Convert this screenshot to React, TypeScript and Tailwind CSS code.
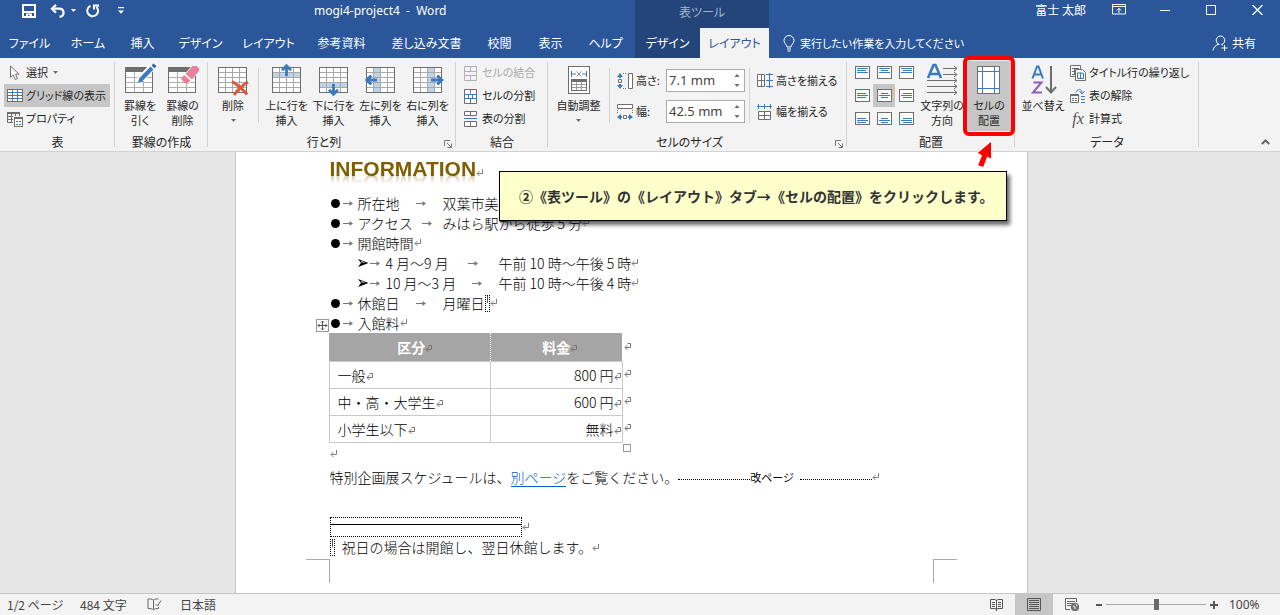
import React from "react";

const GRAY = "#6e6e6e";
const BLUE = "#3a7abd";

type Kids = { children?: React.ReactNode };

/* ---------- small marks used inside the document ---------- */

function Ret() {
  return (
    <svg width="8" height="8" viewBox="0 0 8 8" className="inline-block shrink-0" fill="none" stroke="#808080" aria-hidden="true">
      <path d="M6.500 0v4.500H1M3.500 2 1 4.500 3.500 7" />
    </svg>
  );
}

function CellRet() {
  return (
    <svg width="8" height="8" viewBox="0 0 8 8" className="inline-block shrink-0" fill="none" stroke="#757575" aria-hidden="true">
      <path d="M3.500 .5h3v4H1M3.500 2 1 4.500 3.500 7" />
    </svg>
  );
}

function TabMark() {
  return (
    <svg width="11" height="7" viewBox="0 0 11 7" className="inline-block shrink-0" fill="none" stroke="#777" aria-hidden="true">
      <path d="M0 3.500h9" />
      <path d="M6.500 1 10 3.500 6.500 6z" fill="#777" stroke="none" />
    </svg>
  );
}

/* ---------- ribbon icons ---------- */

function Grid({ band, arrow }: { band?: "top" | "bottom" | "left" | "right"; arrow?: React.ReactNode }) {
  return (
    <svg width="32" height="34" viewBox="0 0 32 34" aria-hidden="true" fill="none">
      <rect x="1.500" y="4.500" width="28" height="25" fill="#fff" stroke={GRAY} />
      {band === "top" && <rect x="2" y="10" width="27" height="5" fill="#bfd3e8" />}
      {band === "bottom" && <rect x="2" y="20" width="27" height="5" fill="#bfd3e8" />}
      {band === "left" && <rect x="9" y="5" width="7" height="24" fill="#bfd3e8" />}
      {band === "right" && <rect x="16" y="5" width="7" height="24" fill="#bfd3e8" />}
      <path d="M2 9.500h27M2 14.500h27M2 19.500h27M2 24.500h27M8.500 5v24M15.500 5v24M22.500 5v24" stroke="#a8a8a8" />
      {arrow}
    </svg>
  );
}

const upArrow = <path d="M15.500 2.500V13M11 7.200 15.500 2.700 20 7.200" stroke={BLUE} strokeWidth="2.800" />;
const downArrow = <path d="M15.500 21v10M11 26.800l4.500 4.500 4.500-4.500" stroke={BLUE} strokeWidth="2.800" />;
const leftArrow = <path d="M12 17H2M6.200 12.500 1.700 17l4.500 4.500" stroke={BLUE} strokeWidth="2.800" />;
const rightArrow = <path d="M19 17h10M25.300 12.500l4.500 4.500-4.500 4.500" stroke={BLUE} strokeWidth="2.800" />;
const cross = <path d="M15 18.500c5 3 11 8 15 13M31 19c-5 3-10 7-14 13" stroke="#d8593b" strokeWidth="3" />;

function DrawTable({ erase }: { erase?: boolean }) {
  return (
    <svg width="34" height="34" viewBox="0 0 34 34" aria-hidden="true" fill="none">
      <rect x="2.500" y="4.500" width="27" height="25" fill="#fff" stroke={GRAY} />
      <rect x="2" y="4" width="28" height="5" fill={GRAY} />
      <path d="M3 14.500h26M3 19.500h26M3 24.500h26M11.500 9v20M20.500 9v20" stroke="#b0b0b0" />
      {erase ? (
        <g>
          <path d="M14.500 16 26 2.500l8 5L22.500 21.500z" fill="#fff" />
          <path d="M19.500 11 26.500 3h4l2.500 2v3l-7 8.500z" fill="#e8829a" />
          <path d="m15.500 14.800 2.500-2.700 6.500 5.500-2.700 2.900h-2.300l-4-3.700z" fill="#e8829a" />
        </g>
      ) : (
        <g>
          <path d="M15 19 30 3" stroke="#fff" strokeWidth="7" />
          <path d="M18 16.500 29 5" stroke={BLUE} strokeWidth="4" />
          <path d="M30 3.800 32 1.800" stroke="#2f5f9c" strokeWidth="4" />
          <path d="m15 20 1.500-5.500 4 4z" fill={BLUE} />
        </g>
      )}
    </svg>
  );
}

function AutoFit() {
  return (
    <svg width="32" height="34" viewBox="0 0 32 34" aria-hidden="true" fill="none">
      <rect x="5.500" y="3.500" width="21" height="27" fill="#fff" stroke={GRAY} />
      <path d="M8.500 8v6M23.500 8v6M9 11h4M19 11h4" stroke={BLUE} />
      <path d="m13.500 8.500 5 5M18.500 8.500l-5 5" stroke="#888" />
      <rect x="8.500" y="16.500" width="15" height="11" stroke={GRAY} />
      <rect x="8" y="16" width="16" height="3" fill={GRAY} />
      <path d="M9 21.500h14M9 24.500h14M13.500 19v8M18.500 19v8" stroke="#999" />
    </svg>
  );
}

function TextDirection() {
  return (
    <svg width="34" height="34" viewBox="0 0 34 34" aria-hidden="true" fill="none">
      <path d="m3 15 5.500-13h2L16 15M5 11h9" stroke={BLUE} strokeWidth="2.600" />
      <path d="M18 5.500h14M18 11.500h14M2 17.500h30M2 23.500h30M2 29.500h30M29 3l3 2.500L29 8M29 9l3 2.500-3 2.500M29 15l3 2.500-3 2.500M29 21l3 2.500-3 2.500M29 27l3 2.500-3 2.500" stroke={GRAY} />
    </svg>
  );
}

function CellMargins() {
  return (
    <svg width="32" height="34" viewBox="0 0 32 34" aria-hidden="true" fill="none">
      <rect x="4.500" y="3.500" width="22" height="27" fill="#fff" stroke={GRAY} />
      <path d="M9.500 4v26M21.500 4v26M5 8.500h21M5 25.500h21" stroke={BLUE} />
    </svg>
  );
}

function SortIcon() {
  return (
    <svg width="32" height="34" viewBox="0 0 32 34" aria-hidden="true" fill="none">
      <path d="m5.500 15.500 4.500-12h1.500l4.500 12M7 11.500h7.500" stroke={BLUE} strokeWidth="2" />
      <path d="M6.500 19.500h8L6 29.500h9" stroke="#8f5fb5" strokeWidth="2" />
      <path d="M24 3v26M19 24l5 5.500 5-5.500" stroke={GRAY} strokeWidth="2" />
    </svg>
  );
}

function SmallIcon({ children }: Kids) {
  return (
    <svg width="16" height="16" viewBox="0 0 16 16" fill="none" className="shrink-0" aria-hidden="true">
      {children}
    </svg>
  );
}

const icons: Record<string, React.ReactNode> = {
  pointer: (
    <SmallIcon>
      <path d="M3.500 1v11.500l2.800-2.600 2 4.600 2.200-1-2-4.400h3.400z" fill="#fff" stroke={GRAY} />
    </SmallIcon>
  ),
  gridlines: (
    <SmallIcon>
      <rect x=".5" y="1.500" width="15" height="12" fill="#fff" stroke={GRAY} />
      <path d="M1 4.500h14M1 7.500h14M1 10.500h14M5.500 2v11M10.500 2v11" stroke={BLUE} />
    </SmallIcon>
  ),
  properties: (
    <SmallIcon>
      <path d="M.5 1v10.500H6M0 1.500h13M0 2.500h13M12.500 1v4M1 5.500h5M1 8.500h5M4.500 3v8M8.500 3v2" stroke={GRAY} />
      <rect x="7.500" y="6.500" width="8" height="9" fill="#fff" stroke={GRAY} />
      <path d="M7 7.500h9" stroke={GRAY} />
      <path d="M9 10.500h2M12 10.500h2M9 13.500h2M12 13.500h2" stroke={BLUE} />
    </SmallIcon>
  ),
  merge: (
    <SmallIcon>
      <path d="M1.500 1.500h12v14h-12zM1.500 6.500h12M1.500 10.500h12M7.500 1.500v5M7.500 10.500v5" fill="#f7effa" stroke="#b4b0b4" />
    </SmallIcon>
  ),
  split: (
    <SmallIcon>
      <path d="M1.500 1.500h12v14h-12zM7.500 1.500v4M7.500 11v4.500" fill="#fff" stroke={GRAY} />
      <path d="M1 6.500h13M1 10.500h13M5.500 6v4.500M9.500 6v4.500" stroke={BLUE} />
    </SmallIcon>
  ),
  splitTable: (
    <SmallIcon>
      <path d="M1.500 4.500v-4h12v4zM1.500 10.500h12v5h-12zM7.500 .5v4M7.500 10.500v5" fill="#fff" stroke={GRAY} />
      <path d="M1 7.500h13" stroke={BLUE} />
    </SmallIcon>
  ),
  height: (
    <SmallIcon>
      <path d="M3 1v4M3 15v-4" stroke={BLUE} strokeWidth="2" />
      <path d="m0 4 3-4 3 4zM0 12l3 4 3-4z" fill={BLUE} />
      <path d="M1.500 6.500h3v3h-3z" stroke={GRAY} />
      <path d="M6 .5h4M6 15.500h4" stroke={GRAY} strokeDasharray="1 1" />
      <path d="M11.500 .5h4v15h-4z" fill="#fff" stroke={GRAY} />
    </SmallIcon>
  ),
  width: (
    <SmallIcon>
      <path d="M.5 .5h15v4H.5z" fill="#fff" stroke={GRAY} />
      <path d="M.5 6v4M15.500 6v4" stroke={GRAY} strokeDasharray="1 1" />
      <path d="M1 13h4M15 13h-4" stroke={BLUE} strokeWidth="2" />
      <path d="m4 10-4 3 4 3zM12 10l4 3-4 3z" fill={BLUE} />
      <path d="M6.500 11.500h3v3h-3z" fill="#fff" stroke={GRAY} />
    </SmallIcon>
  ),
  distRows: (
    <SmallIcon>
      <path d="M.5 1.500h7v12h-7zM.5 7.500h7M4.500 1.500v12" fill="#fff" stroke={GRAY} />
      <path d="M12.500 0v15M9 1.500h7M9 7.500h7M9 13.500h7" stroke={BLUE} />
    </SmallIcon>
  ),
  distCols: (
    <SmallIcon>
      <path d="M1.500 7.500h12v8h-12zM1.500 11.500h12M7.500 7.500v8" fill="#fff" stroke={GRAY} />
      <path d="M0 2.500h15M1.500 0v5M7.500 0v5M13.500 0v5" stroke={BLUE} />
    </SmallIcon>
  ),
  repeat: (
    <SmallIcon>
      <path d="M.5 .5h10v11H.5z" fill="#fff" stroke={GRAY} />
      <path d="M2 3.500h7M4.500 3v7M2 6.500h4M2 9.500h4" stroke={GRAY} />
      <path d="M5.500 4.500h7l3 3v8h-10z" fill="#fff" stroke={GRAY} />
      <path d="M7 8h6M7.500 8v5.500h6V8M10.500 8v5.500" stroke={BLUE} />
    </SmallIcon>
  ),
  convert: (
    <SmallIcon>
      <path d="M.5 6.500h8v8h-8zM0 7.500h9" fill="#fff" stroke={GRAY} />
      <path d="M2 10.500h2M5 10.500h2M2 12.500h2M5 12.500h2" stroke={GRAY} />
      <path d="M6 4.500c1-4 6-4 6 .5M9.500 3l2.500 3 2.500-3M11 8.500h4M11 11.500h4M11 14.500h4" stroke={BLUE} />
    </SmallIcon>
  ),
};

/* ---------- ribbon building blocks ---------- */

function Caret({ className = "" }: { className?: string }) {
  return (
    <svg width="5" height="3" viewBox="0 0 5 3" className={className} fill="currentColor" aria-hidden="true">
      <path d="M0 0h5L2.500 3z" />
    </svg>
  );
}

function Launcher() {
  return (
    <button aria-label="詳細" className="absolute right-1 bottom-[3px]">
      <svg width="8" height="8" viewBox="0 0 8 8" fill="none" stroke="#777" aria-hidden="true">
        <path d="M.5 6V.5H6M3 3l4 4M7.500 3.500v4h-4" />
      </svg>
    </button>
  );
}

function Group({ label, width, launcher, children }: Kids & { label: string; width: string; launcher?: boolean }) {
  return (
    <section aria-label={label} className={`relative flex shrink-0 flex-col ${width}`}>
      <div className="flex h-[74px] items-start pt-[3px] pl-1">{children}</div>
      <div className={`text-center text-[12px] leading-[19px] ${launcher ? "pr-4" : ""}`}>{label}</div>
      {launcher && <Launcher />}
      <span className="absolute top-1 right-0 h-[85px] w-px bg-[#d2d2d2]" />
    </section>
  );
}

function Big({ icon, lines, width, caret, active }: { icon: React.ReactNode; lines: string[]; width: string; caret?: boolean; active?: boolean }) {
  return (
    <button className={`flex h-[70px] shrink-0 flex-col items-center text-[11px] leading-[15px] whitespace-nowrap ${width} ${active ? "bg-[#c6c6c6]" : ""}`}>
      <span className="mt-[2px] mb-px block h-[34px]">{icon}</span>
      {lines.map((l) => (
        <span key={l}>{l}</span>
      ))}
      {caret && <Caret className="mt-1.5 text-[#6e6e6e]" />}
    </button>
  );
}

function Row({ icon, label, caret, active, disabled }: { icon: React.ReactNode; label: string; caret?: boolean; active?: boolean; disabled?: boolean }) {
  return (
    <button
      disabled={disabled}
      className={`flex h-[23px] items-center gap-[3px] pr-1 pl-[3px] text-[11px] whitespace-nowrap ${active ? "bg-[#c6c6c6]" : ""} ${disabled ? "text-[#aaa]" : ""}`}
    >
      {icon}
      <span>{label}</span>
      {caret && <Caret className="ml-[2px] text-[#6e6e6e]" />}
    </button>
  );
}

function Divider() {
  return <span className="mx-1 mt-[7px] h-[55px] w-px shrink-0 bg-[#d2d2d2]" />;
}

function SizeField({ id, icon, label, value }: { id: string; icon: React.ReactNode; label: string; value: string }) {
  return (
    <div className="flex h-[23px] items-center">
      {icon}
      <label htmlFor={id} className="w-[33px] pl-[3px] text-[11px]">
        {label}
      </label>
      <div className="flex h-[23px] w-[79px] items-center border border-[#ababab] bg-white">
        <input id={id} defaultValue={value} className="w-[62px] bg-transparent pl-[2px] font-['Noto_Sans'] text-[13px] text-[#444] outline-none" />
        <svg width="8" height="15" viewBox="0 0 8 15" fill="#6a6a6a" className="ml-1" aria-hidden="true">
          <path d="M1.500 4 4 1l2.500 3zM1.500 11 4 14l2.500-3z" />
        </svg>
      </div>
    </div>
  );
}

const alignLines = [
  ["M2 2.500h11M2 4.500h9M2 6.500h11", "M2 2.500h11M4 4.500h7M2 6.500h11", "M2 2.500h11M4 4.500h9M2 6.500h11"],
  ["M2 4.500h9M2 6.500h11M2 8.500h9", "M4 4.500h7M2 6.500h11M4 8.500h7", "M4 4.500h9M2 6.500h11M4 8.500h9"],
  ["M2 6.500h9M2 8.500h11M2 10.500h9", "M4 6.500h7M2 8.500h11M4 10.500h7", "M4 6.500h9M2 8.500h11M4 10.500h9"],
];
const alignNames = ["上揃え 左", "上揃え 中央", "上揃え 右", "中央 左", "中央", "中央 右", "下揃え 左", "下揃え 中央", "下揃え 右"];

function AlignGrid() {
  return (
    <div className="grid w-[66px] grid-cols-3">
      {alignLines.flat().map((d, i) => (
        <button key={i} aria-label={alignNames[i]} className={`flex h-[23px] items-center justify-center pb-px ${i === 4 ? "bg-[#c6c6c6]" : ""}`}>
          <svg width="15" height="13" viewBox="0 0 15 13" fill="none" aria-hidden="true">
            <rect x=".5" y=".5" width="14" height="12" fill="#fff" stroke={GRAY} />
            <path d={d} stroke={BLUE} />
          </svg>
        </button>
      ))}
    </div>
  );
}

function Ribbon() {
  return (
    <div className="relative flex h-[94px] shrink-0 border-b border-[#d2d2d2] bg-[#f3f3f3] text-[#262626]">
      <Group label="表" width="w-[115px]">
        <div className="flex w-[106px] flex-col">
          <Row icon={icons.pointer} label="選択" caret />
          <Row icon={icons.gridlines} label="グリッド線の表示" active />
          <Row icon={icons.properties} label="プロパティ" />
        </div>
      </Group>
      <Group label="罫線の作成" width="w-[93px]">
        <Big icon={<DrawTable />} lines={["罫線を", "引く"]} width="w-[42px]" />
        <Big icon={<DrawTable erase />} lines={["罫線の", "削除"]} width="w-[43px]" />
      </Group>
      <Group label="行と列" width="w-[248px]" launcher>
        <Big icon={<Grid arrow={cross} />} lines={["削除"]} width="w-[42px]" caret />
        <Divider />
        <Big icon={<Grid band="top" arrow={upArrow} />} lines={["上に行を", "挿入"]} width="w-[47px]" />
        <Big icon={<Grid band="bottom" arrow={downArrow} />} lines={["下に行を", "挿入"]} width="w-[47px]" />
        <Big icon={<Grid band="left" arrow={leftArrow} />} lines={["左に列を", "挿入"]} width="w-[47px]" />
        <Big icon={<Grid band="right" arrow={rightArrow} />} lines={["右に列を", "挿入"]} width="w-[47px]" />
      </Group>
      <Group label="結合" width="w-[92px]">
        <div className="flex flex-col">
          <Row icon={icons.merge} label="セルの結合" disabled />
          <Row icon={icons.split} label="セルの分割" />
          <Row icon={icons.splitTable} label="表の分割" />
        </div>
      </Group>
      <Group label="セルのサイズ" width="w-[299px]" launcher>
        <Big icon={<AutoFit />} lines={["自動調整"]} width="w-[53px]" caret />
        <Divider />
        <div className="ml-[3px] flex flex-col gap-2 pt-2">
          <SizeField id="row-height" icon={icons.height} label="高さ:" value="7.1 mm" />
          <SizeField id="col-width" icon={icons.width} label="幅:" value="42.5 mm" />
        </div>
        <Divider />
        <div className="flex flex-col gap-2 pt-2">
          <Row icon={icons.distRows} label="高さを揃える" />
          <Row icon={icons.distCols} label="幅を揃える" />
        </div>
      </Group>
      <Group label="配置" width="w-[168px]">
        <AlignGrid />
        <Big icon={<TextDirection />} lines={["文字列の", "方向"]} width="w-[50px]" />
        <div className="relative">
          <Big icon={<CellMargins />} lines={["セルの", "配置"]} width="w-[44px]" active />
          <span className="pointer-events-none absolute -inset-x-1 -inset-y-[5px] z-10 rounded-md border-4 border-[#f00]" />
          <svg width="22" height="30" viewBox="0 0 22 30" className="pointer-events-none absolute top-[78px] left-1.5 z-20" aria-hidden="true">
            <path d="M18.500 2v18.500l-4-2.500-4 10.500-6-2 4-10L4 14z" fill="#f00" stroke="#fff" />
          </svg>
        </div>
      </Group>
      <Group label="データ" width="w-[184px]">
        <Big icon={<SortIcon />} lines={["並べ替え"]} width="w-[48px]" />
        <div className="flex flex-col">
          <Row icon={icons.repeat} label="タイトル行の繰り返し" />
          <Row icon={icons.convert} label="表の解除" />
          <Row icon={<span className="w-4 font-['Liberation_Serif',serif] text-[16px] leading-4 text-[#555] italic">fx</span>} label="計算式" />
        </div>
      </Group>
      <button aria-label="リボンを折りたたむ" className="absolute right-2.5 bottom-1">
        <svg width="9" height="9" viewBox="0 0 9 9" fill="none" stroke="#666" strokeWidth="2" aria-hidden="true">
          <path d="M.8 6 4.500 2.500 8.200 6" />
        </svg>
      </button>
    </div>
  );
}

/* ---------- title bar and tabs ---------- */

function TitleBar() {
  return (
    <div className="flex h-7 shrink-0 items-center bg-[#2b579a] text-[12px] text-white">
      <div className="flex w-[314px] shrink-0 items-center pb-[7px] pl-[22px]">
        <button aria-label="保存">
          <svg width="14" height="14" viewBox="0 0 14 14" fill="none" stroke="#fff" aria-hidden="true">
            <path d="M1 1h12v12H1zM1 8h12" strokeWidth="2" />
            <path d="M4 9.500h6V13H7.500v-2H6v2H4z" fill="#fff" stroke="none" />
          </svg>
        </button>
        <button aria-label="元に戻す" className="ml-[14px] flex items-center gap-[5px]">
          <svg width="16" height="14" viewBox="0 0 16 14" fill="none" stroke="#fff" strokeWidth="2.200" aria-hidden="true">
            <path d="M6 .8 2 4.700l4 4M2 4.700h7c6 0 6 8 .5 8" />
          </svg>
          <Caret />
        </button>
        <button aria-label="やり直し" className="ml-2.5">
          <svg width="14" height="14" viewBox="0 0 14 14" fill="none" stroke="#fff" strokeWidth="2" aria-hidden="true">
            <path d="M4.500 1.900A5.400 5.400 0 1 0 10.500 3M8 5.500V1.500h5" />
          </svg>
        </button>
        <button aria-label="カスタマイズ" className="ml-[18px]">
          <svg width="6" height="7" viewBox="0 0 6 7" fill="#fff" aria-hidden="true">
            <path d="M0 0h6v1.300H0zM0 3.500h6L3 6.800z" />
          </svg>
        </button>
      </div>
      <div className="w-[321px] shrink-0 pb-1.5 font-['Noto_Sans'] whitespace-pre">mogi4-project4  -  Word</div>
      <div className="h-full w-[134px] shrink-0 bg-[#244579] pt-[3px] text-center text-[#a3b5d3]">表ツール</div>
      <div className="flex flex-1 items-center justify-end pr-[17px] pb-[9px]">
        <span>富士 太郎</span>
        <button aria-label="リボンの表示オプション" className="ml-[26px]">
          <svg width="14" height="11" viewBox="0 0 14 11" fill="none" stroke="#fff" aria-hidden="true">
            <path d="M.5.500h13v9.500H.5zM.5 2.500h13M7 9V4.500M4.800 6.500 7 4.300l2.200 2.200" />
          </svg>
        </button>
        <button aria-label="最小化" className="ml-[34px]">
          <svg width="10" height="10" viewBox="0 0 10 10" stroke="#fff" aria-hidden="true"><path d="M0 5.500h10" /></svg>
        </button>
        <button aria-label="最大化" className="ml-[36px]">
          <svg width="10" height="10" viewBox="0 0 10 10" fill="none" stroke="#fff" aria-hidden="true"><path d="M.5.500h9v9h-9z" /></svg>
        </button>
        <button aria-label="閉じる" className="ml-[36px]">
          <svg width="11" height="10" viewBox="0 0 11 10" stroke="#fff" strokeWidth="1.300" aria-hidden="true"><path d="m.5 0 10 10M10.500 0l-10 10" /></svg>
        </button>
      </div>
    </div>
  );
}

const tabs: [string, string][] = [
  ["ファイル", "w-[59px]"],
  ["ホーム", "w-[58px]"],
  ["挿入", "w-[51px]"],
  ["デザイン", "w-[65px]"],
  ["レイアウト", "w-[71px]"],
  ["参考資料", "w-[75px]"],
  ["差し込み文書", "w-[95px]"],
  ["校閲", "w-[51px]"],
  ["表示", "w-[51px]"],
  ["ヘルプ", "w-[59px]"],
];

function Tabs() {
  return (
    <nav className="flex h-[30px] shrink-0 items-stretch bg-[#2b579a] text-[12px] whitespace-nowrap text-white">
      {tabs.map(([t, w]) => (
        <button key={t} className={`shrink-0 ${w}`}>
          {t}
        </button>
      ))}
      <button className="w-[65px] shrink-0 bg-[#244579]">デザイン</button>
      <button className="w-[69px] shrink-0 bg-[#f3f3f3] text-[#2b579a]">レイアウト</button>
      <button className="ml-[14px] flex items-center gap-[5px] text-[11px]">
        <svg width="12" height="17" viewBox="0 0 12 17" fill="none" stroke="#fff" aria-hidden="true">
          <path d="M4 12c0-2.500-3-3.500-3-6.500a5 5 0 0 1 10 0c0 3-3 4-3 6.500zM4 14h4M4.500 16h3" />
        </svg>
        実行したい作業を入力してください
      </button>
      <button className="mr-[24px] ml-auto flex items-center gap-1">
        <svg width="16" height="16" viewBox="0 0 16 16" fill="none" stroke="#fff" aria-hidden="true">
          <path d="M7.500 9.500a4.300 4.300 0 1 1 2 0M7 9c-3 1-5.500 3-6 6.500M9.500 9.500l1.500.8M12.500 10v6M9.500 13h6" />
        </svg>
        共有
      </button>
    </nav>
  );
}

/* ---------- document ---------- */

function Bullet({ label, value, children }: Kids & { label: string; value?: string }) {
  return (
    <li className="flex h-5 items-center">
      <span className="mr-[3px] ml-px size-[9px] shrink-0 rounded-full bg-black" />
      <TabMark />
      <span className="ml-1 flex items-center">
        <span className={`flex items-center ${value ? "w-[85px]" : ""}`}>
          {label}
          {value ? (
            <span className="flex flex-1 items-center justify-center">
              <TabMark />
            </span>
          ) : (
            <Ret />
          )}
        </span>
        {value}
        {children}
      </span>
    </li>
  );
}

function SubBullet({ label, value }: { label: string; value: string }) {
  return (
    <li className="flex h-5 items-center pl-7">
      <svg width="11" height="8" viewBox="0 0 11 8" className="shrink-0" aria-hidden="true">
        <path d="M0 0 10.500 4 0 8l3-4z" fill="#000" />
        <path d="M2.500 1.700 7.500 3.600H4z" fill="#fff" />
      </svg>
      <span className="mx-px flex"><TabMark /></span>
      <span className="ml-1 flex w-[113px] items-center">
        {label}
        <span className="flex flex-1 items-center justify-center">
          <TabMark />
        </span>
      </span>
      {value}
      <Ret />
    </li>
  );
}

function NoteMark() {
  return (
    <svg width="5" height="17" viewBox="0 0 5 17" className="shrink-0" fill="none" stroke="#000" aria-hidden="true">
      <path d="M.5 0v17M4.500 0v17" strokeDasharray="1 1" />
      <path d="M2.500 1v7" stroke="#555" />
      <path d="M0 .5h5M0 16.500h5" strokeDasharray="1 1" />
    </svg>
  );
}

const prices: [string, string][] = [
  ["一般", "800 円"],
  ["中・高・大学生", "600 円"],
  ["小学生以下", "無料"],
];

function PriceTable() {
  return (
    <div className="relative -ml-px flex">
      <span className="absolute -top-[14px] -left-[13px] flex size-[13px] items-center justify-center border border-[#999] bg-white">
        <svg width="11" height="11" viewBox="0 0 11 11" fill="none" stroke="#555" aria-hidden="true">
          <path d="M1 5.500h9M5.500 1v9M4 2.500 5.500 1 7 2.500M4 8.500 5.500 10 7 8.500M2.500 4 1 5.500 2.500 7M8.500 4 10 5.500 8.500 7" />
        </svg>
      </span>
      <table className="w-[294px] table-fixed border-collapse text-[14px]">
        <thead>
          <tr className="h-7 bg-[#a5a5a5] text-white">
            <th className="w-[161px] border-r border-dotted border-white p-0 pl-3 leading-5 font-bold">区分<CellRet /></th>
            <th className="p-0 pl-2 leading-5 font-bold">料金<CellRet /></th>
          </tr>
        </thead>
        <tbody>
          {prices.map(([k, v]) => (
            <tr key={k} className="h-[27px]">
              <td className="border border-[#c9c9c9] p-0 pl-2 leading-5">{k}<CellRet /></td>
              <td className="border border-[#c9c9c9] p-0 text-right leading-5">{v}<CellRet /></td>
            </tr>
          ))}
        </tbody>
      </table>
      <div className="flex flex-col pl-px">
        {[0, 1, 2, 3].map((i) => (
          <span key={i} className="flex h-[27px] items-center"><CellRet /></span>
        ))}
      </div>
      <span className="absolute -bottom-[9px] left-[294px] size-[8px] border border-[#999] bg-white" />
    </div>
  );
}

function Document() {
  return (
    <main className="relative flex min-h-0 flex-1 justify-center bg-[#e6e6e6] pr-[18px]">
      <article className="w-[793px] border-x border-[#c6c6c6] bg-white px-[94px] font-['Noto_Sans_CJK_JP',sans-serif] text-[14px] font-light text-black [font-feature-settings:normal]">
        <div className="flex h-[41px] items-start pt-[5px]">
          <h1 className="font-['Liberation_Sans',sans-serif] text-[21px] leading-[23px] font-bold text-[#7f5f00] [-webkit-box-reflect:below_-9px_linear-gradient(transparent_45%,rgba(0,0,0,0.5))]">
            INFORMATION
          </h1>
          <span className="mt-1"><Ret /></span>
        </div>
        <ul>
          <Bullet label="所在地" value="双葉市美原町" />
          <Bullet label="アクセス" value="みはら駅から徒歩 5 分"><Ret /></Bullet>
          <Bullet label="開館時間" />
          <SubBullet label="4 月～9 月" value="午前 10 時～午後 5 時" />
          <SubBullet label="10 月～3 月" value="午前 10 時～午後 4 時" />
          <Bullet label="休館日" value="月曜日"><NoteMark /><Ret /></Bullet>
          <Bullet label="入館料" />
        </ul>
        <PriceTable />
        <p className="flex h-[22px] items-center"><Ret /></p>
        <p className="flex h-[25px] items-center whitespace-nowrap">
          特別企画展スケジュールは、
          <a href="#schedule" className="border-b border-[#0563c1] leading-[18px] text-[#0563c1]">別ページ</a>
          をご覧ください。
          <span className="mt-1 w-[72px] border-b border-dotted border-black" />
          <span className="text-[11px] font-normal text-black">改ページ</span>
          <span className="mt-1 ml-1.5 w-[72px] border-b border-dotted border-black" />
          <Ret />
        </p>
        <div className="mt-[27px] flex items-center">
          <span className="h-[20px] w-[192px] border border-dotted border-black pt-[6px]">
            <span className="block h-px bg-black" />
          </span>
          <Ret />
        </div>
        <p className="flex h-[22px] items-center">
          <NoteMark />
          <span className="ml-[7px]">祝日の場合は開館し、翌日休館します。</span>
          <Ret />
        </p>
        <div className="-mx-6 flex justify-between">
          <span className="h-6 w-6 border-t border-r border-[#aaa]" />
          <span className="h-6 w-6 border-t border-l border-[#aaa]" />
        </div>
      </article>
      <p className="absolute top-[19px] left-[499px] border border-black bg-[#ffffcc] py-[14px] pr-3 pl-[19px] text-[14px] leading-5 font-bold whitespace-nowrap text-[#333] shadow-[3px_4px_4px_rgba(0,0,0,0.6)] [font-feature-settings:normal]">
        ②《表ツール》の《レイアウト》タブ→《セルの配置》をクリックします。
      </p>
    </main>
  );
}

/* ---------- status bar ---------- */

function StatusBar() {
  return (
    <footer className="flex h-[22px] shrink-0 items-center border-t border-[#c6c6c6] bg-[#f3f3f3] text-[12px] text-[#444]">
      <span className="w-[80px] pl-[7px]">1/2 ページ</span>
      <span className="w-[67px]">484 文字</span>
      <button aria-label="文章校正" className="w-[33px]">
        <svg width="15" height="13" viewBox="0 0 15 13" fill="none" stroke="#666" aria-hidden="true">
          <path d="M6.500 2v9M6.500 2C5 1 3 .8 1 1v9.500c2 0 4 0 5.500 1.500M6.500 2C8 1 9.500.8 11.500 1M6.500 12c1.500-1.500 3-1.500 5-1.500V9M8.500 6l2 2 3.500-5.500" />
        </svg>
      </button>
      <span>日本語</span>
      <div className="ml-auto flex h-full items-center">
        <button aria-label="閲覧モード" className="flex h-full w-[38px] items-center justify-center">
          <svg width="13" height="13" viewBox="0 0 13 13" fill="none" stroke="#555" aria-hidden="true">
            <path d="M6.500 2v11M.5 1.500H5L6.500 2.500 8 1.500h4.500v9H8l-1.500 1-1.500-1H.5zM2 4.500h3M2 6.500h3M2 8.500h3M8 4.500h3M8 6.500h3M8 8.500h3" />
          </svg>
        </button>
        <button aria-label="印刷レイアウト" className="flex h-full w-[38px] items-center justify-center bg-[#c6c6c6]">
          <svg width="14" height="13" viewBox="0 0 14 13" fill="none" stroke="#555" aria-hidden="true">
            <path d="M.5.500h13v12H.5zM2 2.500h10M2 4.500h10M2 6.500h10M2 8.500h10M2 10.500h10" />
          </svg>
        </button>
        <button aria-label="Web レイアウト" className="flex h-full w-[38px] items-center justify-center">
          <svg width="14" height="13" viewBox="0 0 14 13" fill="none" stroke="#666" aria-hidden="true">
            <path d="M5 11.500H.5V.5h11V4M2 3.500h8M2 5.500h6M2 7.500h4" />
            <circle cx="10" cy="9" r="3.800" fill="#777" stroke="#666" />
            <path d="m8 8 2 1v2M11 6l1 2" stroke="#eee" />
          </svg>
        </button>
        <button aria-label="縮小" className="ml-[5px] flex h-full items-center">
          <svg width="6" height="6" viewBox="0 0 6 6" stroke="#555" strokeWidth="2" aria-hidden="true"><path d="M0 3h6" /></svg>
        </button>
        <input
          type="range"
          aria-label="ズーム"
          min="10"
          max="190"
          defaultValue="100"
          className="mx-1 h-[11px] w-[100px] appearance-none bg-[linear-gradient(#aaa,#aaa)] bg-[length:100%_1px] bg-center bg-no-repeat [&::-webkit-slider-thumb]:h-[11px] [&::-webkit-slider-thumb]:w-[5px] [&::-webkit-slider-thumb]:appearance-none [&::-webkit-slider-thumb]:bg-[#6a6a6a]"
        />
        <button aria-label="拡大" className="flex h-full items-center">
          <svg width="8" height="8" viewBox="0 0 8 8" stroke="#555" strokeWidth="2" aria-hidden="true"><path d="M0 4h8M4 0v8" /></svg>
        </button>
        <span className="w-[62px] pl-[11px] font-['Noto_Sans']">100%</span>
      </div>
    </footer>
  );
}

export default function App() {
  return (
    <div className="flex h-screen min-h-[615px] flex-col overflow-hidden font-['Noto_Sans_CJK_JP',sans-serif] [font-feature-settings:'palt']">
      <TitleBar />
      <Tabs />
      <Ribbon />
      <Document />
      <StatusBar />
    </div>
  );
}
